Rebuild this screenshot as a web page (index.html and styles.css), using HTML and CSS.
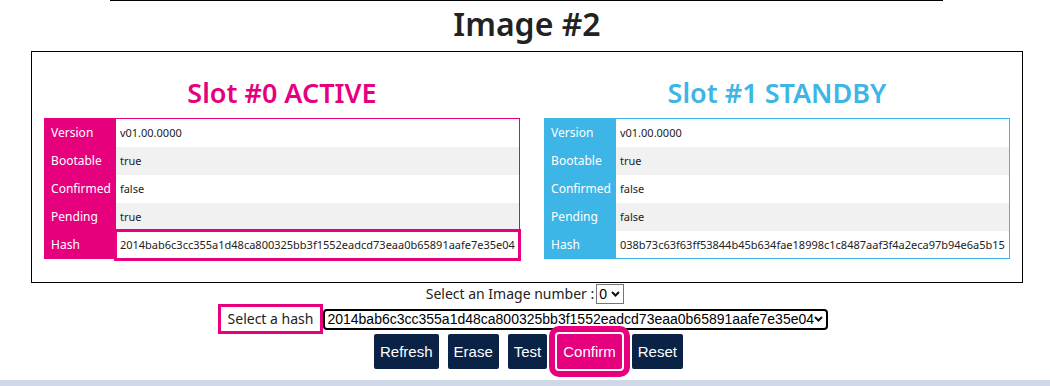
FILE: index.html
```html
<!DOCTYPE html>
<html lang="en">
<head>
    <meta charset="UTF-8">
    <meta name="viewport" content="width=device-width, initial-scale=1.0">
    <title>Image management</title>
    <link rel="stylesheet" href="styles.css">
</head>
<body>
    <div class="top-line"></div>

    <h1 class="image-title">Image #2</h1>

    <div class="slots">
        <div class="slot slot-active">
            <h2>Slot #0 ACTIVE</h2>
            <table class="slot-table">
                <tr><th>Version</th><td>v01.00.0000</td></tr>
                <tr><th>Bootable</th><td>true</td></tr>
                <tr><th>Confirmed</th><td>false</td></tr>
                <tr><th>Pending</th><td>true</td></tr>
                <tr><th>Hash</th><td class="hash-selected">2014bab6c3cc355a1d48ca800325bb3f1552eadcd73eaa0b65891aafe7e35e04</td></tr>
            </table>
        </div>

        <div class="slot slot-standby">
            <h2>Slot #1 STANDBY</h2>
            <table class="slot-table">
                <tr><th>Version</th><td>v01.00.0000</td></tr>
                <tr><th>Bootable</th><td>true</td></tr>
                <tr><th>Confirmed</th><td>false</td></tr>
                <tr><th>Pending</th><td>false</td></tr>
                <tr><th>Hash</th><td>038b73c63f63ff53844b45b634fae18998c1c8487aaf3f4a2eca97b94e6a5b15</td></tr>
            </table>
        </div>
    </div>

    <div class="controls">
        <div class="control-row">
            <label for="imageNumber">Select an Image number :</label>
            <select id="imageNumber" class="image-select">
                <option>0</option>
                <option>1</option>
                <option>2</option>
            </select>
        </div>

        <div class="control-row hash-row">
            <span class="hash-label">Select a hash</span>
            <select id="hashSelect" class="hash-select">
                <option>2014bab6c3cc355a1d48ca800325bb3f1552eadcd73eaa0b65891aafe7e35e04</option>
                <option>038b73c63f63ff53844b45b634fae18998c1c8487aaf3f4a2eca97b94e6a5b15</option>
            </select>
        </div>

        <div class="buttons">
            <button class="btn">Refresh</button>
            <button class="btn">Erase</button>
            <button class="btn">Test</button>
            <button class="btn btn-confirm">Confirm</button>
            <button class="btn">Reset</button>
        </div>
    </div>

    <div class="bottom-band"></div>
</body>
</html>
```

FILE: styles.css
```css
* {
    margin: 0;
    padding: 0;
    box-sizing: border-box;
}

body {
    font-family: 'Noto Sans', 'Open Sans', sans-serif;
    color: #222;
    background: white;
    overflow: hidden;
}

.top-line {
    height: 1px;
    background: #000;
    margin: 0 107px 0 110px;
}

.image-title {
    text-align: center;
    font-size: 32px;
    font-weight: 600;
    line-height: 46px;
    margin: 0 0 4px 4px;
    color: #222;
}

.slots {
    display: grid;
    grid-template-columns: 1fr 1fr;
    border: 1px solid #000;
    margin: 0 27px 0 31px;
    padding: 20px 0 23px;
}

.slot {
    display: flex;
    flex-direction: column;
    align-items: center;
    padding-left: 5px;
}

.slot h2 {
    font-size: 27px;
    font-weight: 600;
    line-height: 42px;
    margin-bottom: 4px;
}

.slot-active h2 {
    color: #e6007e;
}

.slot-standby h2 {
    color: #3db5e6;
}

.slot-table {
    border-collapse: collapse;
    font-size: 11px;
}

.slot-active .slot-table {
    border: 1px solid #e6007e;
}

.slot-standby .slot-table {
    border: 1px solid #3db5e6;
}

.slot-table th {
    width: 69px;
    height: 28px;
    padding: 0 5px 0 6px;
    text-align: left;
    font-weight: 400;
    font-size: 12px;
    color: white;
    white-space: nowrap;
}

.slot-active .slot-table th {
    background: #e6007e;
}

.slot-standby .slot-table th {
    background: #3db5e6;
}

.slot-table td {
    padding: 0 4px;
    height: 28px;
    background: white;
    white-space: nowrap;
}

.slot-table tr:nth-child(even) td {
    background: #f1f1f1;
}

.slot-table td.hash-selected {
    outline: 3px solid #e6007e;
    outline-offset: -1px;
}

.controls {
    display: flex;
    flex-direction: column;
    align-items: center;
    font-size: 14px;
}

.control-row {
    display: flex;
    align-items: center;
}

.control-row label {
    margin-right: 2px;
}

.hash-row {
    margin-right: 4px;
}

.image-select,
.hash-select {
    appearance: none;
    -webkit-appearance: none;
    font-family: 'Liberation Sans', Arial, sans-serif;
    font-size: 14px;
    color: #000;
    background: white url("data:image/svg+xml,%3Csvg xmlns='http://www.w3.org/2000/svg' width='9' height='6' viewBox='0 0 9 6'%3E%3Cpath d='M1 1l3.5 3.5L8 1' fill='none' stroke='%23111' stroke-width='2'/%3E%3C/svg%3E") no-repeat right 3px center;
}

.image-select {
    width: 28px;
    height: 20px;
    margin-top: 1px;
    padding: 0 0 0 2px;
    border: 1px solid #767676;
    border-radius: 0;
}

.hash-label {
    border: 3px solid #e6007e;
    padding: 2px 7px 3px;
}

.hash-select {
    height: 21px;
    padding: 0 12px 0 2px;
    border: 2px solid #000;
    border-radius: 4px;
}

.buttons {
    display: flex;
    gap: 9px;
    padding-left: 7px;
}

.btn {
    height: 35px;
    padding: 0 6px;
    border: none;
    border-radius: 2px;
    background: #0b2247;
    color: white;
    font-family: 'Liberation Sans', Arial, sans-serif;
    font-size: 15px;
}

.btn-confirm {
    background: #e6007e;
    outline: 6px solid #e6007e;
    outline-offset: 2px;
    margin: 0 1px;
}

.bottom-band {
    height: 12px;
    margin-top: 11px;
    background: #cfd8e6;
}
```
